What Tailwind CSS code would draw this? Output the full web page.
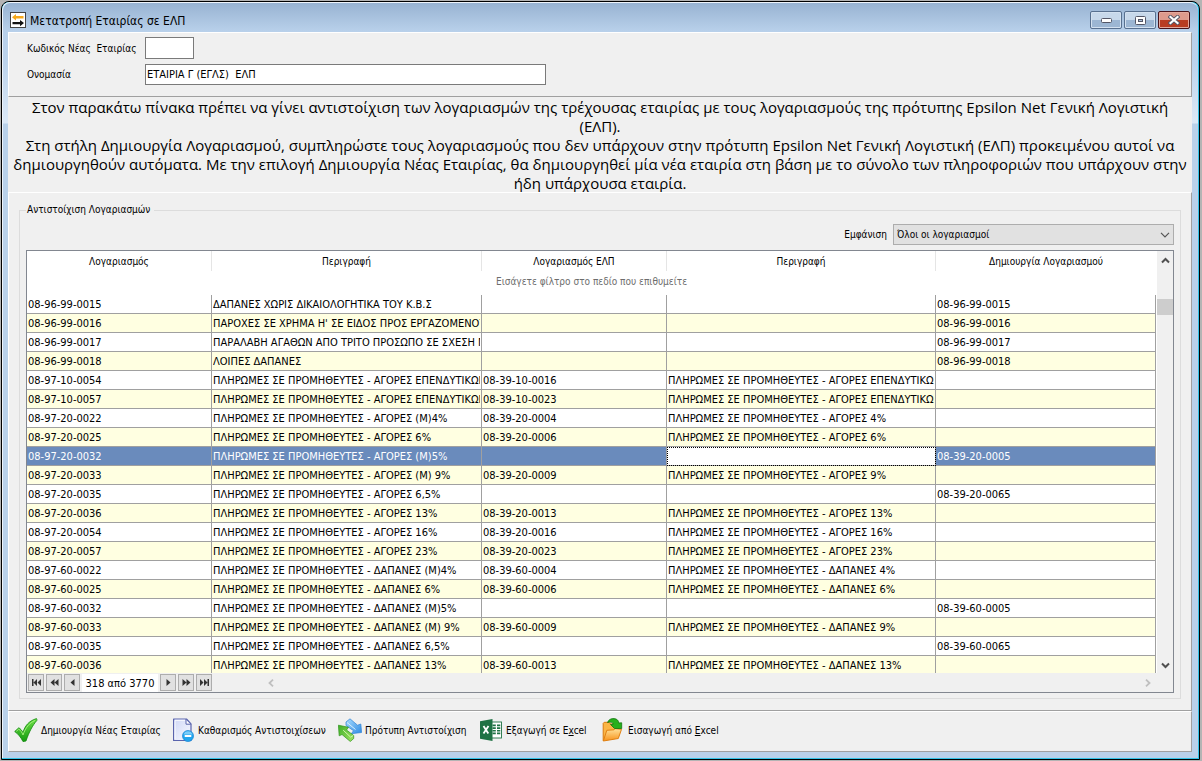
<!DOCTYPE html>
<html lang="el">
<head>
<meta charset="utf-8">
<title>Μετατροπή Εταιρίας σε ΕΛΠ</title>
<script src="https://cdn.jsdelivr.net/npm/@tailwindcss/browser@4"></script>
</head>
<body class="flex h-screen flex-col bg-[#b4b4b4] pt-px pr-0.5 pb-px pl-px font-['DejaVu_Sans_Condensed','DejaVu_Sans',sans-serif] text-[10px] leading-[14px] text-black">
<div class="flex min-h-0 flex-1 flex-col rounded-t-lg border border-black bg-[#33c3e8]">
<div class="flex min-h-0 flex-1 flex-col rounded-t-lg border-t border-l border-t-[#eef4fb] border-l-[#eef4fb] mr-px mb-px bg-[linear-gradient(#98b3d2_0px,#b8d0ea_28px,#bcd3ec_60px,#dce9f7_120px,#b9d1ea_121px)] pr-[6px] pl-[5px] pb-[6px]">

  <header class="flex h-[29px] shrink-0 items-center gap-1 pt-[5px] pr-0.5 pl-0.5">
    <svg class="size-4" viewBox="0 0 16 16" aria-hidden="true"><rect x=".5" y=".5" width="15" height="15" fill="#fff" stroke="#444"/><path d="M2 5.200 6 2v2h7.500v2.400H6v2z" fill="#f5a81c"/><path d="M14 11 10 8v2H2.500v2.200H10v2z" fill="#111"/></svg>
    <h1 class="flex-1 pt-px text-xs leading-4">Μετατροπή Εταιρίας σε ΕΛΠ</h1>
    <div class="flex gap-0.5">
      <button type="button" aria-label="Ελαχιστοποίηση" class="flex h-[18px] w-8 items-center justify-center rounded-xs border border-[#58708f] bg-linear-to-b from-[#c7d8ea] from-50% to-[#9cb6d3] to-50% shadow-[inset_0_0_0_1px_#d3e1f0]">
        <svg class="h-[5px] w-[11px]" viewBox="0 0 11 5"><rect x=".5" y=".5" width="10" height="4" rx="1" fill="#fff" stroke="#535666"/></svg></button>
      <button type="button" aria-label="Μεγιστοποίηση" class="flex h-[18px] w-8 items-center justify-center rounded-xs border border-[#58708f] bg-linear-to-b from-[#c7d8ea] from-50% to-[#9cb6d3] to-50% shadow-[inset_0_0_0_1px_#d3e1f0]">
        <svg class="h-[9px] w-[11px]" viewBox="0 0 11 9"><rect x=".5" y=".5" width="10" height="8" rx="1" fill="#fff" stroke="#535666"/><rect x="3.500" y="3.500" width="4" height="2" fill="#a9bfd8" stroke="#535666"/></svg></button>
      <button type="button" aria-label="Κλείσιμο" class="flex h-[18px] w-8 items-center justify-center rounded-xs border border-[#48131a] bg-linear-to-b from-[#dd9a8c] from-50% to-[#b83c22] to-50% shadow-[inset_0_0_0_1px_#e3a99d]">
        <svg class="h-[10px] w-3" viewBox="0 0 12 10"><path d="m2.500 2 7 6m0-6-7 6" stroke="#535666" stroke-width="4" stroke-linecap="square"/><path d="m2.500 2 7 6m0-6-7 6" stroke="#fff" stroke-width="2.200" stroke-linecap="square"/></svg></button>
    </div>
  </header>

  <section class="flex shrink-0 flex-col gap-[5px] border border-t-white border-r-[#a0a0a0] border-b-[#a0a0a0] border-l-white bg-[#f0f0f0] pt-1 pb-[11px] pl-[18px]">
    <div class="flex items-center">
      <label for="code" class="w-[118px] pt-px whitespace-pre">Κωδικός Νέας  Εταιρίας</label>
      <input id="code" class="h-[22px] w-[49px] border border-[#7a7a7a] bg-white px-px text-[11px]">
    </div>
    <div class="flex items-center">
      <label for="name" class="w-[118px] pt-px">Ονομασία</label>
      <input id="name" value="ΕΤΑΙΡΙΑ Γ (ΕΓΛΣ)  ΕΛΠ" class="h-[21px] w-[401px] border border-[#7a7a7a] bg-white px-px text-[11px]">
    </div>
  </section>

  <div class="flex shrink-0 flex-col items-center bg-[#f0f0f0] pt-px font-['Open_Sans','Noto_Sans',sans-serif] text-[15px] leading-[19px] whitespace-nowrap">
    <p>Στον παρακάτω πίνακα πρέπει να γίνει αντιστοίχιση των λογαριασμών της τρέχουσας εταιρίας με τους λογαριασμούς της πρότυπης Epsilon Net Γενική Λογιστική</p>
    <p>(ΕΛΠ).</p>
    <p>Στη στήλη Δημιουργία Λογαριασμού, συμπληρώστε τους λογαριασμούς που δεν υπάρχουν στην πρότυπη Epsilon Net Γενική Λογιστική (ΕΛΠ) προκειμένου αυτοί να</p>
    <p>δημιουργηθούν αυτόματα. Με την επιλογή Δημιουργία Νέας Εταιρίας, θα δημιουργηθεί μία νέα εταιρία στη βάση με το σύνολο των πληροφοριών που υπάρχουν στην</p>
    <p class="h-[18px]">ήδη υπάρχουσα εταιρία.</p>
  </div>

  <main class="flex min-h-0 flex-1 flex-col border border-t-white border-r-[#a0a0a0] border-b-[#a0a0a0] border-l-white bg-[#f0f0f0] px-[10px] pt-[10px] pb-[11px]">
    <fieldset class="flex min-h-0 flex-1 flex-col border border-[#dcdcdc] px-[6px] pb-[5px]">
      <legend class="pr-1 pl-px">Αντιστοίχιση Λογαριασμών</legend>
      <div class="flex items-center justify-end gap-[6px] pt-[7px] pb-[5px]">
        <label for="show">Εμφάνιση</label>
        <div class="relative">
          <select id="show" class="h-[21px] w-[281px] appearance-none border border-[#adadad] bg-[#e1e1e1] px-[3px] pt-px text-[10px]"><option>Όλοι οι λογαριασμοί</option></select>
          <svg class="pointer-events-none absolute top-2 right-1 h-[6px] w-[10px]" viewBox="0 0 10 6"><path d="m1 .8 4 4 4-4" fill="none" stroke="#555" stroke-width="1.200"/></svg>
        </div>
      </div>

      <div class="flex min-h-0 flex-1 flex-col border border-[#828790]">
        <div class="flex min-h-0 flex-1">
          <div class="min-w-0 flex-1 overflow-hidden bg-white pr-px">
            <table class="w-full table-fixed border-separate border-spacing-0 text-[11px] leading-[17px] whitespace-nowrap">
              <colgroup><col class="w-[185px]"><col class="w-[270px]"><col class="w-[185px]"><col class="w-[269px]"><col class="w-[220px]"></colgroup>
              <thead class="text-[10px]">
                <tr class="h-5">
                  <th class="border-r border-[#e5e5e5] p-0 pt-px font-normal">Λογαριασμός</th>
                  <th class="border-r border-[#e5e5e5] p-0 pt-px font-normal">Περιγραφή</th>
                  <th class="border-r border-[#e5e5e5] p-0 pt-px font-normal">Λογαριασμός ΕΛΠ</th>
                  <th class="border-r border-[#e5e5e5] p-0 pt-px font-normal">Περιγραφή</th>
                  <th class="p-0 pt-px font-normal">Δημιουργία Λογαριασμού</th>
                </tr>
                <tr class="h-6"><td colspan="5" class="p-0 pb-1 text-center text-[#6d6d6d]">Εισάγετε φίλτρο στο πεδίο που επιθυμείτε</td></tr>
              </thead>
              <tbody id="rows"></tbody>
            </table>
          </div>
          <div class="flex w-4 shrink-0 flex-col items-center bg-[#f0f0f0]">
            <svg class="mt-[6px] h-[7px] w-[9px] shrink-0" viewBox="0 0 9 7"><path d="m1 5.500 3.500-3.500 3.500 3.500" fill="none" stroke="#505050" stroke-width="2"/></svg>
            <div class="mt-[35px] h-4 w-full shrink-0 bg-[#cdcdcd]"></div>
            <svg class="mt-auto mb-1 h-[7px] w-[9px] shrink-0" viewBox="0 0 9 7"><path d="m1 1.500 3.500 3.500 3.500-3.500" fill="none" stroke="#505050" stroke-width="2"/></svg>
          </div>
        </div>
        <div class="flex h-[19px] shrink-0 items-center bg-[#f0f0f0] pl-px">
          <nav class="flex items-center gap-0.5" aria-label="Εγγραφές">
            <button type="button" aria-label="Πρώτη" class="flex h-[17px] w-4 items-center justify-center border border-[#adadad] bg-[#e1e1e1]"><svg class="h-[7px] w-[11px]" viewBox="0 0 11 7" fill="#333"><path d="M1 0h1.500v7H1zM6 0v7L2.500 3.500zM10 0v7L6.500 3.500z"/></svg></button>
            <button type="button" aria-label="Προηγούμενη σελίδα" class="flex h-[17px] w-4 items-center justify-center border border-[#adadad] bg-[#e1e1e1]"><svg class="h-[7px] w-[9px]" viewBox="0 0 9 7" fill="#333"><path d="M4.500 0v7L.5 3.500zM8.500 0v7l-4-3.500z"/></svg></button>
            <button type="button" aria-label="Προηγούμενη" class="flex h-[17px] w-4 items-center justify-center border border-[#adadad] bg-[#e1e1e1]"><svg class="h-[7px] w-[5px]" viewBox="0 0 5 7" fill="#333"><path d="M4.500 0v7L.5 3.500z"/></svg></button>
            <span class="h-[18px] w-[76px] bg-white pt-px text-center text-[11px] leading-[17px]">318 από 3770</span>
            <button type="button" aria-label="Επόμενη" class="flex h-[17px] w-4 items-center justify-center border border-[#adadad] bg-[#e1e1e1]"><svg class="h-[7px] w-[5px]" viewBox="0 0 5 7" fill="#333"><path d="M.5 0v7l4-3.500z"/></svg></button>
            <button type="button" aria-label="Επόμενη σελίδα" class="flex h-[17px] w-4 items-center justify-center border border-[#adadad] bg-[#e1e1e1]"><svg class="h-[7px] w-[9px]" viewBox="0 0 9 7" fill="#333"><path d="M.5 0v7l4-3.500zM4.500 0v7l4-3.500z"/></svg></button>
            <button type="button" aria-label="Τελευταία" class="flex h-[17px] w-4 items-center justify-center border border-[#adadad] bg-[#e1e1e1]"><svg class="h-[7px] w-[11px]" viewBox="0 0 11 7" fill="#333"><path d="M10 0H8.500v7H10zM5 0v7l3.500-3.500zM1 0v7l3.500-3.500z"/></svg></button>
          </nav>
          <div class="flex flex-1 items-center justify-between pr-[22px] pl-14">
            <svg class="h-[8px] w-[6px]" viewBox="0 0 6 8"><path d="M5 .7 1.500 4 5 7.300" fill="none" stroke="#bfbfbf" stroke-width="1.800"/></svg>
            <svg class="h-[8px] w-[6px]" viewBox="0 0 6 8"><path d="M1 .7 4.500 4 1 7.300" fill="none" stroke="#bfbfbf" stroke-width="1.800"/></svg>
          </div>
        </div>
      </div>
    </fieldset>
  </main>

  <footer class="flex h-[41px] shrink-0 items-center border border-t-white border-r-[#a0a0a0] border-b-[#a0a0a0] border-l-white bg-[#f0f0f0] pb-[3px] pl-[5px] whitespace-nowrap">
    <button type="button" class="flex w-[158px] items-center gap-[3px]">
      <svg class="size-6" viewBox="0 0 24 24"><defs><linearGradient id="g1" x2="0" y2="1"><stop stop-color="#6fe048"/><stop offset="1" stop-color="#149a10"/></linearGradient></defs><path d="M.7 13.500 4.800 9.800C6.500 10.800 8 12.500 8.900 14.500 11 8 14.500 3 22.500.6c.4.600.5 1.200.3 1.900C18.500 7.500 15 14 12 23l-3 .6C7 19.500 4.300 16 .7 13.500z" fill="url(#g1)" stroke="#128a0e" stroke-width=".8" stroke-linejoin="round"/><path d="M2.300 13.300 4.800 11.200c1.800 1.200 3.200 3 4.200 5.800C11.500 9.500 15.500 5 21 2.500" fill="none" stroke="#a6f27f" stroke-width=".9"/></svg>
      <span class="pt-px">Δημιουργία Νέας Εταιρίας</span></button>
    <button type="button" class="flex w-[166px] items-center gap-1">
      <svg class="h-6 w-[22px]" viewBox="0 0 22 24"><defs><linearGradient id="g2" x2="1" y2="1"><stop stop-color="#cfd7f6"/><stop offset="1" stop-color="#fafbff"/></linearGradient></defs><path d="M1.600 1h12.900L19 5.800V22.500H1.600z" fill="url(#g2)" stroke="#5a64ad" stroke-width="1.200" stroke-linejoin="round"/><path d="M14 1.200v5h5z" fill="#fff" stroke="#5a64ad" stroke-linejoin="round"/><path d="M3 2.300h10M3 2.300v19" stroke="#fff" stroke-width=".9"/><circle cx="16" cy="18" r="5.500" fill="#22a5ee" stroke="#1583d2" stroke-width=".7"/><path d="M11.500 16.500a4.700 4.700 0 0 1 9 0z" fill="#7accf9"/><rect x="12.700" y="17" width="6.600" height="2" fill="#fff"/></svg>
      <span class="pt-px">Καθαρισμός Αντιστοιχίσεων</span></button>
    <button type="button" class="flex w-[142px] items-center gap-[3px]">
      <svg class="size-6" viewBox="0 0 24 24"><defs><linearGradient id="g3" x2="1" y2="1"><stop stop-color="#a8dcff"/><stop offset="1" stop-color="#2d8ae2"/></linearGradient><linearGradient id="g4" x2="1" y2="1"><stop stop-color="#3fae28"/><stop offset="1" stop-color="#a2e562"/></linearGradient></defs><path d="M8 4 12 .8l7.500 6.400 3.300-1.200.8 8.500-10.300 1.200 2.200-3L8 7.500z" fill="url(#g3)" stroke="#2f83d3" stroke-width=".7" stroke-linejoin="round"/><path d="m9 4.500 8.500 7" stroke="#d9f1ff" stroke-width="1"/><path d="M.4 7.200 10.500 9.300 8.500 12l7.200 5.500v3L12.300 23.500 4 16.500 1.200 17.800z" fill="url(#g4)" stroke="#2d921b" stroke-width=".7" stroke-linejoin="round"/><path d="m5.200 12.200 7.500 7 2.500-1.700" fill="none" stroke="#d4f8ae" stroke-width="1"/></svg>
      <span class="pt-px">Πρότυπη Αντιστοίχιση</span></button>
    <button type="button" class="flex w-[122px] items-center gap-1">
      <svg class="h-[22px] w-[22px]" viewBox="0 0 22 22"><rect x="11" y="3" width="10.500" height="16" fill="#fff" stroke="#1f7244" stroke-width=".9"/><path d="M12.500 5.500h3.300v1.700h-3.300zm4.500 0h3.300v1.700H17zm-4.500 2.700h3.300v1.700h-3.300zm4.500 0h3.300v1.700H17zm-4.500 2.700h3.300v1.700h-3.300zm4.500 0h3.300v1.700H17zm-4.500 2.700h3.300v1.700h-3.300zm4.500 0h3.300v1.700H17z" fill="#1f7244"/><path d="M0 2.300 12.500 0v22L0 19.700z" fill="#1f7244"/><path d="m3.500 7 4.800 7.500M8.500 7l-5 7.500" stroke="#fff" stroke-width="1.800"/></svg>
      <span class="pt-px">Εξαγωγή σε E<u>x</u>cel</span></button>
    <button type="button" class="flex items-center gap-1">
      <svg class="h-6 w-[22px]" viewBox="0 0 22 24"><defs><linearGradient id="g5" x2="0" y2="1"><stop stop-color="#ffe29a"/><stop offset="1" stop-color="#f8931b"/></linearGradient></defs><path d="M1.200 22.800V5.300l1-1h5L8.500 6h8v6" fill="#fbb545" stroke="#d97a0f" stroke-linejoin="round"/><path d="M1.300 23 4.800 12.300 12 11.800l1-1.200 6.500.7L16.300 20.500z" fill="url(#g5)" stroke="#e07f10" stroke-linejoin="round"/><path d="M5.500 4.500C6.500 1.500 9.500.3 12.200.6c2.800.3 4.500 2 4.500 4.400l3-.2v5.700L12.500 10.500 8.500 6.500l2.800-.3C11 4.500 8.500 3.500 5.500 4.500z" fill="#26b01c" stroke="#12750e" stroke-width=".8" stroke-linejoin="round"/></svg>
      <span class="pt-px">Εισαγωγή από <u>E</u>xcel</span></button>
  </footer>
</div>
</div>

<script>
const P = 'ΠΛΗΡΩΜΕΣ ΣΕ ΠΡΟΜΗΘΕΥΤΕΣ - ';
const rows = [
  ['08-96-99-0015', 'ΔΑΠΑΝΕΣ ΧΩΡΙΣ ΔΙΚΑΙΟΛΟΓΗΤΙΚΑ ΤΟΥ Κ.Β.Σ', '', '', '08-96-99-0015'],
  ['08-96-99-0016', "ΠΑΡΟΧΕΣ ΣΕ ΧΡΗΜΑ Η' ΣΕ ΕΙΔΟΣ ΠΡΟΣ ΕΡΓΑΖΟΜΕΝΟΥ", '', '', '08-96-99-0016'],
  ['08-96-99-0017', 'ΠΑΡΑΛΑΒΗ ΑΓΑΘΩΝ ΑΠΟ ΤΡΙΤΟ ΠΡΟΣΩΠΟ ΣΕ ΣΧΕΣΗ Μ', '', '', '08-96-99-0017'],
  ['08-96-99-0018', 'ΛΟΙΠΕΣ ΔΑΠΑΝΕΣ', '', '', '08-96-99-0018'],
  ['08-97-10-0054', P + 'ΑΓΟΡΕΣ ΕΠΕΝΔΥΤΙΚΩΝ', '08-39-10-0016', P + 'ΑΓΟΡΕΣ ΕΠΕΝΔΥΤΙΚΩΝ', ''],
  ['08-97-10-0057', P + 'ΑΓΟΡΕΣ ΕΠΕΝΔΥΤΙΚΩΝ', '08-39-10-0023', P + 'ΑΓΟΡΕΣ ΕΠΕΝΔΥΤΙΚΩΝ', ''],
  ['08-97-20-0022', P + 'ΑΓΟΡΕΣ (Μ)4%', '08-39-20-0004', P + 'ΑΓΟΡΕΣ 4%', ''],
  ['08-97-20-0025', P + 'ΑΓΟΡΕΣ 6%', '08-39-20-0006', P + 'ΑΓΟΡΕΣ 6%', ''],
  ['08-97-20-0032', P + 'ΑΓΟΡΕΣ (Μ)5%', '', '', '08-39-20-0005'],
  ['08-97-20-0033', P + 'ΑΓΟΡΕΣ (Μ) 9%', '08-39-20-0009', P + 'ΑΓΟΡΕΣ 9%', ''],
  ['08-97-20-0035', P + 'ΑΓΟΡΕΣ 6,5%', '', '', '08-39-20-0065'],
  ['08-97-20-0036', P + 'ΑΓΟΡΕΣ 13%', '08-39-20-0013', P + 'ΑΓΟΡΕΣ 13%', ''],
  ['08-97-20-0054', P + 'ΑΓΟΡΕΣ 16%', '08-39-20-0016', P + 'ΑΓΟΡΕΣ 16%', ''],
  ['08-97-20-0057', P + 'ΑΓΟΡΕΣ 23%', '08-39-20-0023', P + 'ΑΓΟΡΕΣ 23%', ''],
  ['08-97-60-0022', P + 'ΔΑΠΑΝΕΣ (Μ)4%', '08-39-60-0004', P + 'ΔΑΠΑΝΕΣ 4%', ''],
  ['08-97-60-0025', P + 'ΔΑΠΑΝΕΣ 6%', '08-39-60-0006', P + 'ΔΑΠΑΝΕΣ 6%', ''],
  ['08-97-60-0032', P + 'ΔΑΠΑΝΕΣ (Μ)5%', '', '', '08-39-60-0005'],
  ['08-97-60-0033', P + 'ΔΑΠΑΝΕΣ (Μ) 9%', '08-39-60-0009', P + 'ΔΑΠΑΝΕΣ 9%', ''],
  ['08-97-60-0035', P + 'ΔΑΠΑΝΕΣ 6,5%', '', '', '08-39-60-0065'],
  ['08-97-60-0036', P + 'ΔΑΠΑΝΕΣ 13%', '08-39-60-0013', P + 'ΔΑΠΑΝΕΣ 13%', '']
];
const body = document.getElementById('rows');
rows.forEach((cells, r) => {
  const tr = body.insertRow();
  const selected = r === 8;
  tr.className = selected ? 'h-[19px] bg-[#6a8bbc] text-white' : r % 2 ? 'h-[19px] bg-[#ffffe1]' : 'h-[19px] bg-white';
  cells.forEach((text, c) => {
    const td = tr.insertCell();
    td.className = 'border-r border-b border-[#a0a0a0] px-px pt-px pb-0';
    if (selected && c === 3) td.className += ' bg-white outline-1 -outline-offset-1 outline-dotted outline-black';
    const clip = document.createElement('div');
    clip.className = 'overflow-hidden';
    clip.textContent = text;
    td.append(clip);
  });
});
</script>
</body>
</html>
